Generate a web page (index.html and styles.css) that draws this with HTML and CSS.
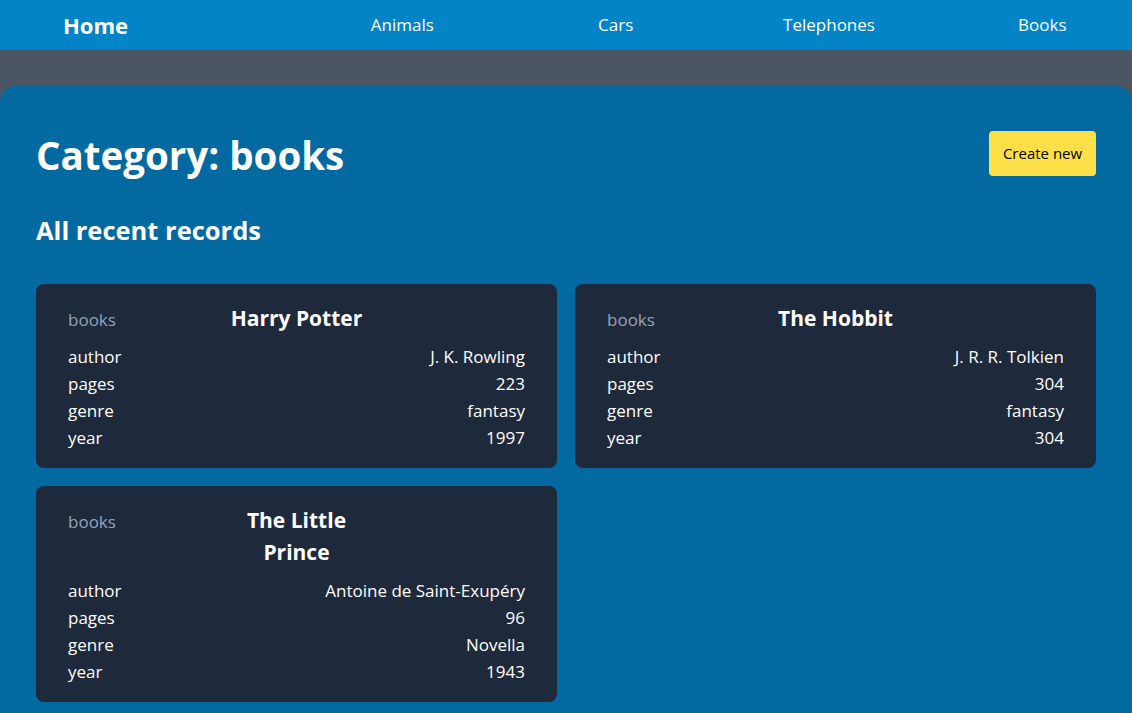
FILE: index.html
```html
<!DOCTYPE html>
<html lang="en">
<head>
<meta charset="utf-8">
<title>Category: books</title>
<link rel="stylesheet" href="styles.css">
</head>
<body>
<nav class="nav">
  <a class="nav-home" href="#">Home</a>
  <ul class="nav-links">
    <li><a href="#">Animals</a></li>
    <li><a href="#">Cars</a></li>
    <li><a href="#">Telephones</a></li>
    <li><a href="#">Books</a></li>
  </ul>
</nav>
<div class="band"></div>
<main class="main">
  <div class="head-row">
    <h1 class="title">Category: books</h1>
    <button class="btn-create">Create new</button>
  </div>
  <h2 class="subtitle">All recent records</h2>
  <div class="grid">
    <article class="card">
      <div class="card-head">
        <span class="card-cat">books</span>
        <h3 class="card-title">Harry Potter</h3>
        <span></span>
      </div>
      <div class="row"><span>author</span><span>J. K. Rowling</span></div>
      <div class="row"><span>pages</span><span>223</span></div>
      <div class="row"><span>genre</span><span>fantasy</span></div>
      <div class="row"><span>year</span><span>1997</span></div>
    </article>
    <article class="card">
      <div class="card-head">
        <span class="card-cat">books</span>
        <h3 class="card-title">The Hobbit</h3>
        <span></span>
      </div>
      <div class="row"><span>author</span><span>J. R. R. Tolkien</span></div>
      <div class="row"><span>pages</span><span>304</span></div>
      <div class="row"><span>genre</span><span>fantasy</span></div>
      <div class="row"><span>year</span><span>304</span></div>
    </article>
    <article class="card">
      <div class="card-head">
        <span class="card-cat">books</span>
        <h3 class="card-title">The Little Prince</h3>
        <span></span>
      </div>
      <div class="row"><span>author</span><span>Antoine de Saint-Exupéry</span></div>
      <div class="row"><span>pages</span><span>96</span></div>
      <div class="row"><span>genre</span><span>Novella</span></div>
      <div class="row"><span>year</span><span>1943</span></div>
    </article>
  </div>
</main>
</body>
</html>
```

FILE: styles.css
```css
* { box-sizing: border-box; }
html, body { margin: 0; padding: 0; }
body {
  font-family: "Open Sans", "Noto Sans", sans-serif;
  background: #4b5563;
  color: #fff;
  overflow: hidden;
  height: 713px;
}
a { color: inherit; text-decoration: none; }

.nav {
  height: 50px;
  background: #0284c7;
  display: flex;
  align-items: center;
  padding-left: 63px;
  overflow: hidden;
}
.nav-home {
  font-size: 22px;
  font-weight: 700;
}
.nav-links {
  list-style: none;
  margin: 0 -17px 0 auto;
  padding: 0 0 2px;
  display: flex;
}
.nav-links li {
  width: 213.33px;
  text-align: center;
  font-size: 17px;
}

.band { height: 36px; }

.main {
  background: #0369a1;
  border-radius: 16px 16px 0 0;
  padding: 45px 36px 0;
  min-height: 627px;
}
.head-row {
  display: flex;
  justify-content: space-between;
  align-items: center;
  height: 45px;
}
.title {
  margin: 0;
  font-size: 38.5px;
  line-height: 45px;
  font-weight: 700;
  position: relative;
  top: 2px;
}
.btn-create {
  background: #fde047;
  color: #000;
  border: 0;
  border-radius: 4px;
  font-family: inherit;
  font-size: 15px;
  font-weight: 500;
  height: 45px;
  width: 107px;
  padding: 0 0 2px;
}
.subtitle {
  margin: 39px 0 0;
  font-size: 25.5px;
  line-height: 30px;
  font-weight: 700;
}
.grid {
  margin-top: 39px;
  display: grid;
  grid-template-columns: 1fr 1fr;
  gap: 18px;
  align-items: start;
}
.card {
  background: #1e293b;
  border-radius: 8px;
  padding: 18px 32px 17px;
}
.card-head {
  display: grid;
  grid-template-columns: 1fr 1fr 1fr;
  align-items: start;
  margin-bottom: 9px;
}
.card-cat {
  color: #94a3b8;
  font-size: 17px;
  line-height: 32px;
  position: relative;
  top: 2px;
}
.card-title {
  margin: 0;
  text-align: center;
  font-size: 21px;
  line-height: 32px;
  font-weight: 700;
}
.row {
  display: flex;
  justify-content: space-between;
  font-size: 17px;
  line-height: 27px;
}
```
